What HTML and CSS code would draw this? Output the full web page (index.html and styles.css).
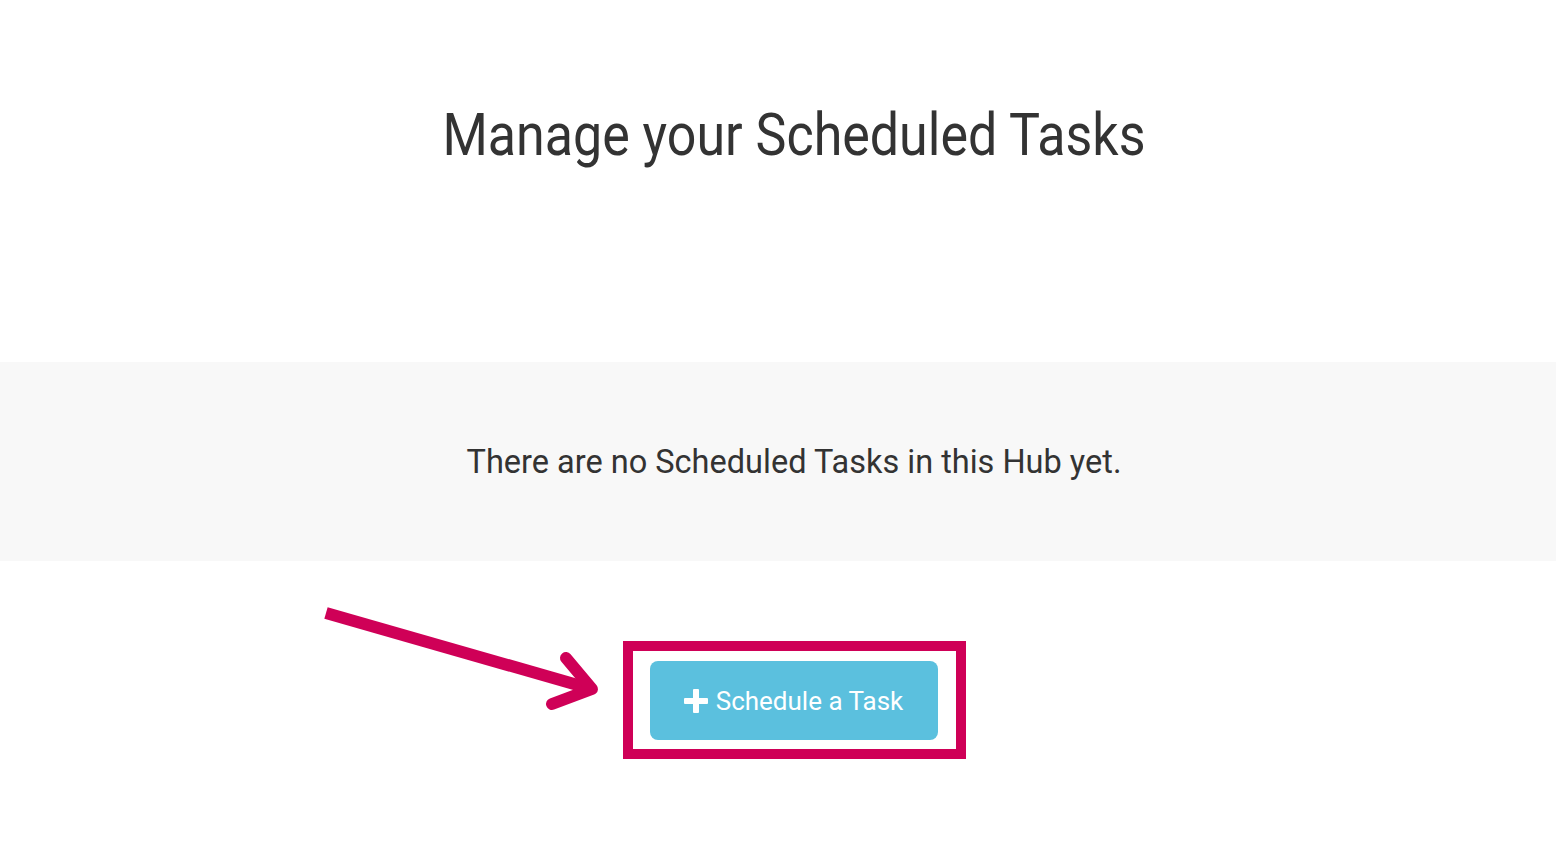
FILE: index.html
```html
<!DOCTYPE html>
<html>
  <head>
    <title>Scheduled Tasks</title>
    <link rel="stylesheet" href="styles.css">
  </head>
  <body>
    <div class="page">
      <h1 class="page-title"><span class="title-text">Manage your Scheduled Tasks</span></h1>

      <!-- Empty state -->
      <div class="empty-band">
        <p class="empty-text">There are no Scheduled Tasks in this Hub yet.</p>
      </div>

      <!-- Action -->
      <div class="action-row">
        <div class="highlight-frame">
          <button class="schedule-btn">
            <svg class="plus-icon" width="24" height="24" viewBox="0 0 24 24">
              <rect x="9" y="0" width="6" height="24" rx="1" fill="#fff"/>
              <rect x="0" y="9" width="24" height="6" rx="1" fill="#fff"/>
            </svg>
            <span>Schedule a Task</span>
          </button>
        </div>
      </div>

      <!-- Annotation arrow -->
      <svg class="callout-arrow" width="300" height="130" viewBox="0 0 300 130">
        <line x1="10" y1="17" x2="272" y2="92" stroke="#cf0057" stroke-width="12" stroke-linecap="butt"/>
        <polyline points="250,62 276,93 236,108" fill="none" stroke="#cf0057" stroke-width="12" stroke-linecap="round" stroke-linejoin="round"/>
      </svg>
    </div>
  </body>
</html>
```

FILE: styles.css
```css
body {
  margin: 0;
  padding: 0;
  background-color: #ffffff;
  font-family: Roboto, "Liberation Sans", sans-serif;
  color: #333333;
}
.page {
  position: relative;
  min-height: 844px;
}
.page-title {
  margin: 0;
  padding: 99px 0 0 32px;
  height: 362px;
  box-sizing: border-box;
  font-size: 60px;
  font-weight: 400;
  line-height: 72px;
  text-align: center;
}
.title-text {
  display: inline-block;
  transform: scaleX(0.866);
}
.empty-band {
  background-color: #f8f8f8;
  height: 199px;
  display: flex;
  align-items: center;
  justify-content: center;
  padding-left: 32px;
}
.empty-text {
  margin: 0;
  font-size: 32.5px;
  line-height: 40px;
}
.action-row {
  display: flex;
  justify-content: center;
  padding: 80px 0 0 32px;
}
.highlight-frame {
  border: 10px solid #cf0057;
  padding: 10px 18px 9px 17px;
  background-color: #ffffff;
}
.schedule-btn {
  display: flex;
  align-items: center;
  justify-content: center;
  gap: 8px;
  width: 288px;
  height: 79px;
  border: none;
  border-radius: 8px;
  background-color: #5bc0de;
  color: #ffffff;
  font-family: Roboto, "Liberation Sans", sans-serif;
  font-size: 26px;
  cursor: pointer;
  padding: 0;
}
.plus-icon {
  flex: none;
}
.callout-arrow {
  position: absolute;
  left: 316px;
  top: 596px;
}
```
